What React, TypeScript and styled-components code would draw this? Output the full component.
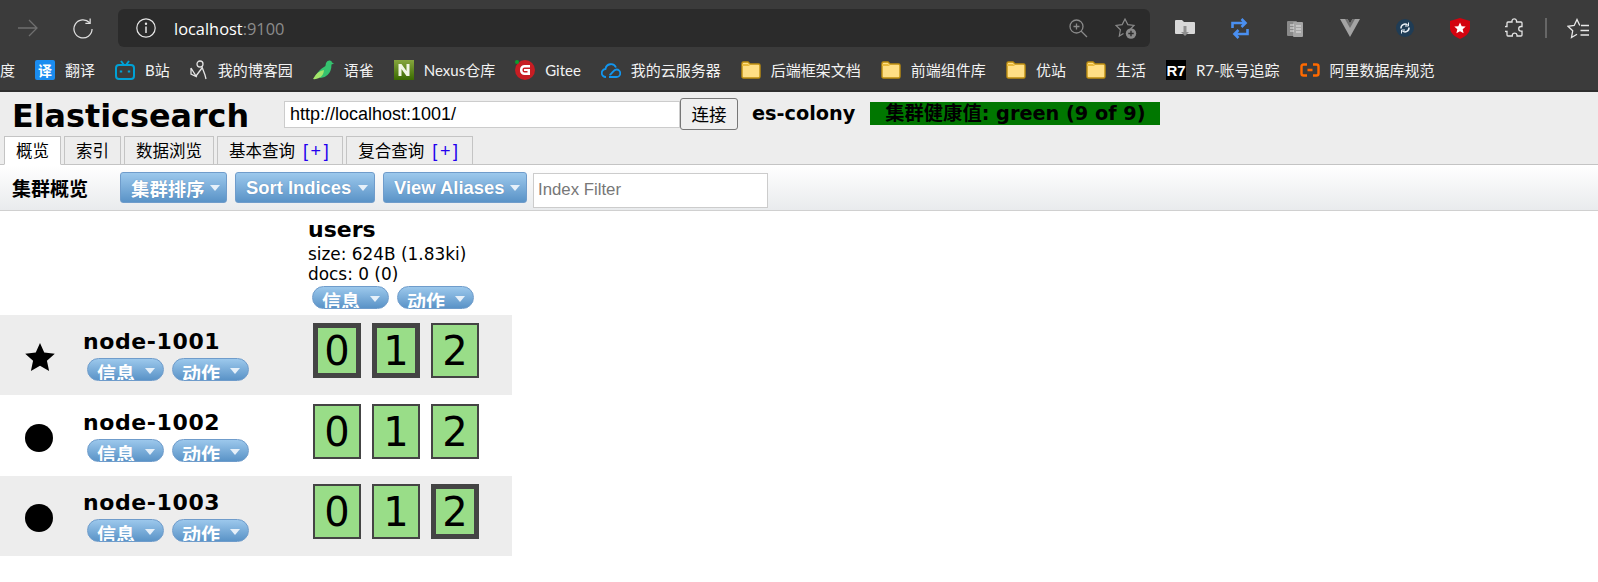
import React from 'react';
import styled, { createGlobalStyle } from 'styled-components';

const GlobalStyle = createGlobalStyle`
  html, body { margin: 0; padding: 0; background: #fff; }
  body { font-family: "DejaVu Sans", "Noto Sans CJK SC", sans-serif; color: #000; }
  * { box-sizing: border-box; }
`;

const Page = styled.div`
  width: 1598px;
  height: 582px;
  overflow: hidden;
`;

/* browser chrome */
const Chrome = styled.div`
  height: 92px;
  background: #3b3b3b;
  border-bottom: 2px solid #2e2e2e;
`;

const TopBar = styled.div`
  height: 47px;
  display: flex;
  align-items: flex-end;
  padding-left: 18px;
`;

const NavIcon = styled.div`
  width: 20px;
  height: 38px;
  margin-right: 35px;
  display: flex;
  align-items: center;
  justify-content: center;
`;

const Address = styled.div`
  width: 1032px;
  height: 38px;
  margin-left: -10px;
  margin-right: 7px;
  padding: 0 13px 0 18px;
  background: #2b2b2b;
  border-radius: 6px;
  display: flex;
  align-items: center;
  font-family: "Open Sans", "Noto Sans", sans-serif;
  font-size: 16.4px;
  color: #fff;
`;

const Url = styled.span`
  margin-left: 18px;
  flex: 1;
`;

const Port = styled.span`
  color: #8c8c8c;
`;

const AddrIcon = styled.div`
  min-width: 19px;
  margin-left: 27px;
  display: flex;
  justify-content: center;
`;

const ExtSlot = styled.div`
  width: 55px;
  height: 38px;
  display: flex;
  align-items: center;
  justify-content: center;
`;

const Separator = styled.div`
  width: 2px;
  height: 20px;
  margin: 0 20px 9px 3px;
  background: #666;
`;

const FavSlot = styled.div`
  height: 38px;
  display: flex;
  align-items: center;
`;

const Bookmarks = styled.div`
  height: 43px;
  padding-top: 2px;
  display: flex;
  align-items: center;
  gap: 20px;
  overflow: hidden;
  color: #f2f2f2;
  font-family: "Lato", "Noto Sans CJK SC", sans-serif;
  font-size: 15px;
  white-space: nowrap;
`;

const Bookmark = styled.div`
  display: flex;
  align-items: center;
  gap: 10px;
`;

/* es-head header */
const Header = styled.div`
  height: 73px;
  background: #ededed;
  border-bottom: 1px solid #c4c4c4;
  display: flex;
  flex-direction: column;
  justify-content: space-between;
`;

const HeaderRow = styled.div`
  display: flex;
  align-items: center;
  height: 37px;
  margin-top: 3px;
`;

const Title = styled.h1`
  width: 272px;
  margin: 3px 0 0 12px;
  font-size: 31.8px;
  font-weight: bold;
  line-height: 37px;
`;

const HostInput = styled.input`
  width: 396px;
  height: 27px;
  margin-top: 1px;
  padding: 0 5px;
  border: 1px solid #ccc;
  background: #fff;
  font-family: "Liberation Sans", sans-serif;
  font-size: 18px;
  color: #000;
  outline: none;
`;

const ConnectButton = styled.button`
  width: 58px;
  height: 32px;
  padding: 0;
  border: 1px solid #777;
  border-radius: 3px;
  background: #efefef;
  font-family: "Noto Sans CJK SC", sans-serif;
  font-size: 17.5px;
  color: #000;
`;

const ClusterName = styled.span`
  margin-left: 14px;
  font-size: 19.3px;
  font-weight: bold;
`;

const Health = styled.span`
  width: 290px;
  height: 23px;
  margin: -1px 0 0 15px;
  background: #007700;
  font-size: 19.3px;
  font-weight: bold;
  line-height: 23px;
  text-align: center;
  white-space: nowrap;
`;

const Tabs = styled.div`
  display: flex;
  gap: 3px;
  padding-left: 4px;
  margin-bottom: -1px;
`;

const Tab = styled.div<{ $active?: boolean }>`
  height: 29px;
  padding: 0 11px;
  border: 1px solid #c4c4c4;
  border-bottom: ${(p) => (p.$active ? '1px solid #fff' : '1px solid #c4c4c4')};
  background: ${(p) => (p.$active ? '#fff' : '#ededed')};
  font-family: "Liberation Sans", "Noto Sans CJK SC", sans-serif;
  font-size: 16.5px;
  line-height: 28px;
  white-space: nowrap;
`;

const Plus = styled.span`
  margin-left: 8px;
  color: #2200ee;
  font-size: 18px;
  letter-spacing: 2.600px;
`;

/* toolbar */
const Toolbar = styled.div`
  height: 46px;
  padding-left: 12px;
  display: flex;
  align-items: center;
  background: linear-gradient(#ffffff, #e9ebed);
  border-bottom: 1px solid #d0d0d0;
`;

const ToolbarTitle = styled.div`
  width: 108px;
  font-family: "Liberation Sans", "Noto Sans CJK SC", sans-serif;
  font-size: 19px;
  font-weight: bold;
`;

const DropButton = styled.div<{ $w: number }>`
  width: ${(p) => p.$w}px;
  height: 31px;
  margin-right: 8px;
  padding: 0 6px 0 10px;
  display: flex;
  align-items: center;
  justify-content: space-between;
  border: 1px solid #6f9ccb;
  border-radius: 3px;
  background: linear-gradient(#9cc8ec, #5a93c7);
  color: #fff;
  font-family: "Liberation Sans", "Noto Sans CJK SC", sans-serif;
  font-size: 18.4px;
  font-weight: bold;
  white-space: nowrap;
  text-shadow: 0 0 1px rgba(60, 100, 150, 0.7);
`;

const Caret = styled.i`
  display: block;
  width: 0;
  height: 0;
  flex: none;
  border-left: 5.500px solid transparent;
  border-right: 5.500px solid transparent;
  border-top: 6px solid #e6f0f9;
`;

const FilterInput = styled.input`
  width: 235px;
  height: 35px;
  margin: 5px 0 0 -2px;
  padding: 0 4px;
  border: 1px solid #ccc;
  background: #fff;
  font-family: "Liberation Sans", sans-serif;
  font-size: 16.8px;
  outline: none;
  &::placeholder { color: #777; }
`;

/* overview table */
const Overview = styled.div`
  width: 512px;
`;

const IndexHead = styled.div`
  height: 104px;
  padding: 5px 0 0 308px;
`;

const IndexName = styled.div`
  font-size: 22px;
  font-weight: bold;
  line-height: 27px;
  margin-bottom: 1px;
`;

const IndexStat = styled.div`
  font-size: 16.9px;
  line-height: 20px;
  white-space: nowrap;
`;

const PillRow = styled.div<{ $left: number; $top?: number }>`
  display: flex;
  gap: 8px;
  margin: ${(p) => p.$top ?? 0}px 0 0 ${(p) => p.$left}px;
`;

const Pill = styled.div`
  width: 77px;
  height: 23px;
  padding: 4px 8px 0 9px;
  display: flex;
  justify-content: space-between;
  overflow: hidden;
  border: 1px solid #6f9ccb;
  border-radius: 12px;
  background: linear-gradient(#9cc8ec, #5a93c7);
  color: #fff;
  font-family: "Liberation Sans", "Noto Sans CJK SC", sans-serif;
  font-size: 19px;
  font-weight: bold;
  line-height: 24px;
  ${Caret} { margin-top: 5px; }
`;

const NodeRow = styled.div<{ $shaded?: boolean; $h: number; $pad: number }>`
  height: ${(p) => p.$h}px;
  padding-top: ${(p) => p.$pad}px;
  display: flex;
  background: ${(p) => (p.$shaded ? '#ededed' : '#fff')};
`;

const NodeIcon = styled.div`
  width: 84px;
  padding: 28px 0 0 25px;
`;

const NodeInfo = styled.div`
  width: 224px;
  padding-top: 13px;
`;

const NodeName = styled.div`
  margin: 0 0 2px -1px;
  font-size: 22px;
  font-weight: bold;
  letter-spacing: 0.6px;
  line-height: 28px;
`;

const Shards = styled.div`
  display: flex;
  gap: 11px;
  padding: 8px 0 0 5px;
`;

const Shard = styled.div<{ $primary?: boolean }>`
  width: 48px;
  height: 55px;
  border: ${(p) => (p.$primary ? '5px' : '2px')} solid #444;
  background: #99dd88;
  font-size: 40px;
  display: flex;
  align-items: center;
  justify-content: center;
`;

const Folder = () => (
  <svg width="20" height="20" viewBox="0 0 20 20">
    <path d="M1 3.500q0-1.500 1.500-1.500h4.500l2 2h8.500q1.500 0 1.500 1.500v11q0 1.500-1.500 1.500h-15q-1.500 0-1.500-1.500z" fill="#ffdf85" stroke="#bf8f10" strokeWidth="1.400" />
    <path d="M1 6h8l-2-2H1z" fill="#e9b93a" />
  </svg>
);

const bookmarks: { label: string; icon: React.ReactNode }[] = [
  {
    label: '翻译',
    icon: (
      <svg width="20" height="20" viewBox="0 0 20 20">
        <rect width="20" height="20" rx="2" fill="#1a8cf0" />
        <text x="10" y="15.500" textAnchor="middle" fontSize="14" fontWeight="bold" fill="#fff" fontFamily="Noto Sans CJK SC">译</text>
      </svg>
    ),
  },
  {
    label: 'B站',
    icon: (
      <svg width="20" height="20" viewBox="0 0 20 20" fill="none" stroke="#00a1d6" strokeWidth="2">
        <rect x="1" y="5" width="18" height="14" rx="3" />
        <path d="M6 1l3 4M14 1l-3 4" />
        <path d="M6 10.500v2M14 10.500v2" strokeWidth="2.400" />
      </svg>
    ),
  },
  {
    label: '我的博客园',
    icon: (
      <svg width="18" height="21" viewBox="0 0 18 21" fill="none" stroke="#e4e4e4" strokeWidth="1.300">
        <circle cx="10" cy="5" r="3" />
        <path d="M1 9l5 8 6-8M12 8l3 8 1 4M1 9v6l6 3" />
      </svg>
    ),
  },
  {
    label: '语雀',
    icon: (
      <svg width="21" height="20" viewBox="0 0 21 20">
        <path d="M3 15Q7 9 11 7 13 6 13 3q1-3 4-2.500 2 .5 2 2l2 1-2.500 1q0 7-4 10.500-3 3-7 3z" fill="#35c26f" />
        <path d="M0 19q4-8 11-9-.5 6-5 8-3 1.500-6 1z" fill="#a3e56a" />
      </svg>
    ),
  },
  {
    label: 'Nexus仓库',
    icon: (
      <svg width="20" height="20" viewBox="0 0 20 20">
        <defs>
          <linearGradient id="nexusBg" x1="0" y1="0" x2="0" y2="1">
            <stop offset="0" stopColor="#86a63e" />
            <stop offset="1" stopColor="#3a6a00" />
          </linearGradient>
        </defs>
        <rect width="20" height="20" fill="url(#nexusBg)" />
        <path d="M4.500 16V4h3l5 7V4h3v12h-3l-5-7v7z" fill="#f1f6e4" />
      </svg>
    ),
  },
  {
    label: 'Gitee',
    icon: (
      <svg width="20" height="20" viewBox="0 0 20 20">
        <circle cx="10" cy="10" r="10" fill="#c71d23" />
        <path d="M5 9.500a4.500 4.500 0 0 1 4.500-4.500H15v2.500H9.500a2 2 0 0 0-2 2v1a2 2 0 0 0 2 2h3v-1.500H9V9h6v6H9.500A4.500 4.500 0 0 1 5 10.500z" fill="#fff" />
        <circle cx="2" cy="2" r="2" fill="#0a9d2f" />
      </svg>
    ),
  },
  {
    label: '我的云服务器',
    icon: (
      <svg width="20" height="16" viewBox="0 0 20 16" fill="none" stroke="#1296f0" strokeWidth="1.800">
        <path d="M5 15a4 4 0 0 1-.500-8 5.500 5.500 0 0 1 10.500-1.500M8 15h7.500a3.500 3.500 0 0 0 0-7.500c-3 0-4 4-7 5.500" />
      </svg>
    ),
  },
  { label: '后端框架文档', icon: <Folder /> },
  { label: '前端组件库', icon: <Folder /> },
  { label: '优站', icon: <Folder /> },
  { label: '生活', icon: <Folder /> },
  {
    label: 'R7-账号追踪',
    icon: (
      <svg width="20" height="20" viewBox="0 0 20 20">
        <rect width="20" height="20" fill="#000" />
        <text x="10" y="16" textAnchor="middle" fontSize="15" fontWeight="bold" fill="#fff" fontFamily="Liberation Sans">R7</text>
      </svg>
    ),
  },
  {
    label: '阿里数据库规范',
    icon: (
      <svg width="20" height="14" viewBox="0 0 20 14" fill="none" stroke="#ff6a00" strokeWidth="2.400">
        <path d="M7 1.500H3.500q-2 0-2 2v7q0 2 2 2H7M13 1.500h3.500q2 0 2 2v7q0 2-2 2H13M7.500 7h5" />
      </svg>
    ),
  },
];

const PillPair = ({ left, top }: { left: number; top?: number }) => (
  <PillRow $left={left} $top={top}>
    <Pill>信息<Caret /></Pill>
    <Pill>动作<Caret /></Pill>
  </PillRow>
);

const nodes = [
  { name: 'node-1001', master: true, primary: [0, 1], h: 80, pad: 0 },
  { name: 'node-1002', master: false, primary: [] as number[], h: 81, pad: 1 },
  { name: 'node-1003', master: false, primary: [2], h: 80, pad: 0 },
];

const App: React.FC = () => (
  <Page>
    <GlobalStyle />
    <Chrome>
      <TopBar>
        <NavIcon>
          <svg width="20" height="20" viewBox="0 0 20 20" fill="none" stroke="#6f6f6f" strokeWidth="1.300">
            <path d="M0 10h19M11 2l8 8-8 8" />
          </svg>
        </NavIcon>
        <NavIcon>
          <svg width="21" height="21" viewBox="0 0 21 21" fill="none" stroke="#e0e0e0" strokeWidth="1.300">
            <path d="M17.500 4.500A9.500 9.500 0 1 0 20 11" />
            <path d="M18 0v5h-5" />
          </svg>
        </NavIcon>
        <Address>
          <svg width="20" height="20" viewBox="0 0 20 20" fill="none" stroke="#e6e6e6" strokeWidth="1.200">
            <circle cx="10" cy="10" r="9.200" />
            <path d="M10 8.500V15" strokeWidth="1.500" />
            <circle cx="10" cy="5.700" r="0.600" />
          </svg>
          <Url>localhost<Port>:9100</Port></Url>
          <AddrIcon>
            <svg width="19" height="19" viewBox="0 0 19 19" fill="none" stroke="#8a8a8a" strokeWidth="1.300">
              <circle cx="7.500" cy="7.500" r="6.500" />
              <path d="M12 12l6 6M7.500 4.500v6M4.500 7.500h6" />
            </svg>
          </AddrIcon>
          <AddrIcon>
            <svg width="22" height="22" viewBox="0 0 22 22">
              <path d="M8.500 16.500L4.300 19l1.100-6.200L1 8.500l6.200-.9L10 2l2.800 5.600 6.200.9-3.500 3.500" fill="none" stroke="#8a8a8a" strokeWidth="1.200" />
              <circle cx="16" cy="16.500" r="5.200" fill="#8a8a8a" />
              <path d="M16 13.800v5.400M13.300 16.500h5.400" stroke="#2b2b2b" strokeWidth="1.400" />
            </svg>
          </AddrIcon>
        </Address>
        <ExtSlot>
          <svg width="20" height="20" viewBox="0 0 20 20">
            <path d="M0 3q0-1 1-1h6l2 2h10q1 0 1 1v10q0 1-1 1H1q-1 0-1-1z" fill="#d8d8d8" />
            <path d="M8.500 8h3v6h2.500l-4 4-4-4h2.500z" fill="#8f8f8f" />
          </svg>
        </ExtSlot>
        <ExtSlot>
          <svg width="18" height="21" viewBox="0 0 18 21" fill="none" stroke="#4a8ff0" strokeWidth="2.600">
            <path d="M1.500 10V5h13M10.500 1l4 4-4 4M16.500 11v5h-13M7.500 12l-4 4 4 4" />
          </svg>
        </ExtSlot>
        <ExtSlot>
          <svg width="16" height="17" viewBox="0 0 16 17">
            <rect y="1" width="10" height="15" rx="1" fill="#8a8a8a" />
            <rect x="6" y="2" width="10" height="15" rx="1" fill="#a5a5a5" />
            <path d="M3 5h4M3 8h4M3 11h4M9 6h5M9 9h5M9 12h5" stroke="#e4e4e4" />
          </svg>
        </ExtSlot>
        <ExtSlot>
          <svg width="20" height="18" viewBox="0 0 20 18">
            <path d="M0 0h7.500L10 4.500 12.500 0H20L10 18z" fill="#a3a3a3" />
            <path d="M7.500 0L10 4.500 12.500 0h2.500L10 9 5 0z" fill="#6f6f6f" />
          </svg>
        </ExtSlot>
        <ExtSlot>
          <svg width="18" height="18" viewBox="0 0 18 18" fill="none">
            <circle cx="9" cy="9" r="9" fill="#1f3c55" />
            <path d="M5 9.500a4 4 0 0 1 6.500-3.500M13 8.500a4 4 0 0 1-6.500 3.500" stroke="#e8eef4" strokeWidth="1.500" />
            <path d="M12.500 3.500v3.500H9M5.500 14.500V11H9" stroke="#e8eef4" strokeWidth="1" />
          </svg>
        </ExtSlot>
        <ExtSlot>
          <svg width="20" height="21" viewBox="0 0 20 21">
            <path d="M10 0l10 3v8q-1 6-10 10Q1 17 0 11V3z" fill="#d3030f" />
            <path d="M10 4.500l1.700 3.700 4 .4-3 2.700.9 4L10 13.200l-3.600 2.100.9-4-3-2.700 4-.4z" fill="#fff" />
          </svg>
        </ExtSlot>
        <ExtSlot>
          <svg width="19" height="20" viewBox="0 0 19 20" fill="none" stroke="#e4e4e4" strokeWidth="1.300">
            <path d="M7 2.500a2.400 2.400 0 0 1 4.500 0V4H16q1 0 1 1v3.500h-1a2.300 2.300 0 0 0 0 4.600h1V17q0 1-1 1h-4v-1a2.400 2.400 0 0 0-4.700 0v1H3q-1 0-1-1v-3.500H1a2.500 2.500 0 0 1 0-5h1V5q0-1 1-1h4z" />
          </svg>
        </ExtSlot>
        <Separator />
        <FavSlot>
          <svg width="22" height="21" viewBox="0 0 22 21" fill="none" stroke="#e8e8e8" strokeWidth="1.300">
            <path d="M12.800 7.500L10 1.500 7.200 7.500 1 8.300l4.700 4.500-1.200 6.700 5.500-3.200M14 7.500h8M13.500 12.500h8.500M13.500 17h8.500" />
          </svg>
        </FavSlot>
      </TopBar>
      <Bookmarks>
        <span>度</span>
        {bookmarks.map((b) => (
          <Bookmark key={b.label}>
            {b.icon}
            <span>{b.label}</span>
          </Bookmark>
        ))}
      </Bookmarks>
    </Chrome>

    <Header>
      <HeaderRow>
        <Title>Elasticsearch</Title>
        <HostInput defaultValue="http://localhost:1001/" />
        <ConnectButton>连接</ConnectButton>
        <ClusterName>es-colony</ClusterName>
        <Health>集群健康值: green (9 of 9)</Health>
      </HeaderRow>
      <Tabs>
        <Tab $active>概览</Tab>
        <Tab>索引</Tab>
        <Tab>数据浏览</Tab>
        <Tab>基本查询<Plus>[+]</Plus></Tab>
        <Tab>复合查询<Plus>[+]</Plus></Tab>
      </Tabs>
    </Header>

    <Toolbar>
      <ToolbarTitle>集群概览</ToolbarTitle>
      <DropButton $w={107}>集群排序<Caret /></DropButton>
      <DropButton $w={140}>Sort Indices<Caret /></DropButton>
      <DropButton $w={144}>View Aliases<Caret /></DropButton>
      <FilterInput placeholder="Index Filter" />
    </Toolbar>

    <Overview>
      <IndexHead>
        <IndexName>users</IndexName>
        <IndexStat>size: 624B (1.83ki)</IndexStat>
        <IndexStat>docs: 0 (0)</IndexStat>
        <PillPair left={4} top={2} />
      </IndexHead>
      {nodes.map((n, i) => (
        <NodeRow key={n.name} $shaded={i !== 1} $h={n.h} $pad={n.pad}>
          <NodeIcon>
            {n.master ? (
              <svg width="30" height="30" viewBox="0 0 29 29">
                <path d="M14.500 0L18.600 9.300 28.800 10.400 21.200 17.200 23.300 27.100 14.500 22 5.700 27.100 7.800 17.200 .2 10.400 10.400 9.300z" />
              </svg>
            ) : (
              <svg width="28" height="28" viewBox="0 0 28 28">
                <circle cx="14" cy="14" r="14" />
              </svg>
            )}
          </NodeIcon>
          <NodeInfo>
            <NodeName>{n.name}</NodeName>
            <PillPair left={3} />
          </NodeInfo>
          <Shards>
            {[0, 1, 2].map((s) => (
              <Shard key={s} $primary={n.primary.includes(s)}>{s}</Shard>
            ))}
          </Shards>
        </NodeRow>
      ))}
    </Overview>
  </Page>
);

export default App;
